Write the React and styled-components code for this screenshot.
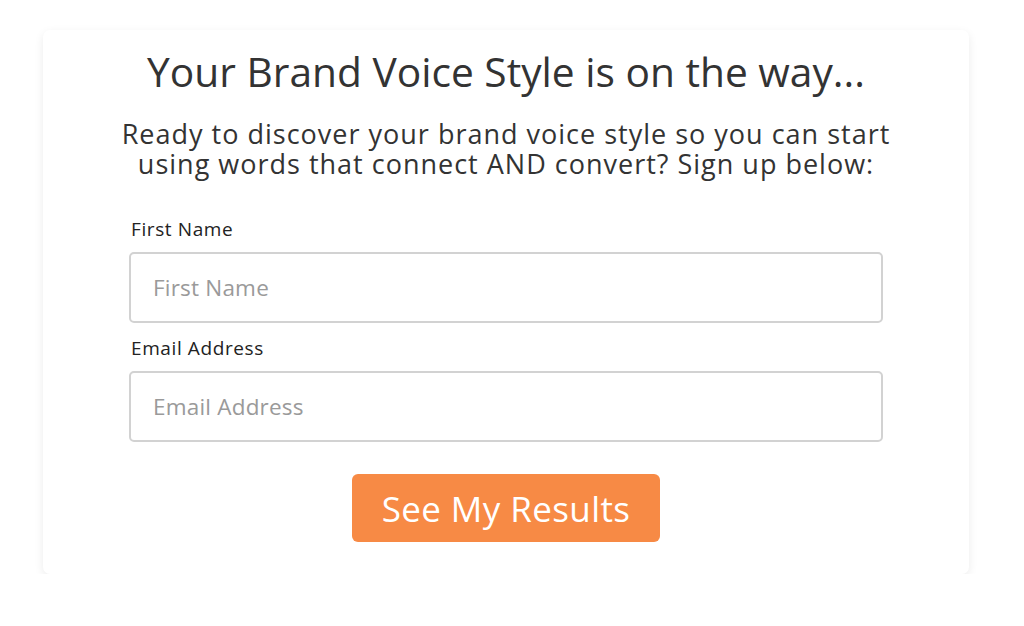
import React from 'react'
import styled, { createGlobalStyle } from 'styled-components'

const GlobalStyle = createGlobalStyle`
  body {
    margin: 0;
    background: #fff;
    font-family: 'Open Sans', Lato, sans-serif;
  }
`

const Page = styled.div`
  display: flex;
  padding: 30px 0 0 43px;
`

const Card = styled.div`
  width: 926px;
  box-sizing: border-box;
  padding: 17px 0 32px;
  background: #fff;
  border-radius: 7px;
  box-shadow: 0 3px 10px rgba(0, 0, 0, 0.08);
  display: flex;
  flex-direction: column;
  align-items: center;
  color: #333;
`

const Title = styled.h1`
  margin: 0;
  font-size: 40.7px;
  font-weight: 400;
  line-height: 48px;
  color: #333;
`

const Intro = styled.p`
  margin: 24px 0 0;
  font-size: 27px;
  line-height: 30px;
  letter-spacing: 1px;
  text-align: center;
  color: #333;
`

const Form = styled.form`
  width: 754px;
  margin-top: 38px;
  display: flex;
  flex-direction: column;
`

const Field = styled.div`
  display: flex;
  flex-direction: column;
  margin-bottom: ${p => p.$gap}px;
`

const Label = styled.label`
  font-size: 19px;
  line-height: 24px;
  letter-spacing: 0.6px;
  margin: 0 0 11px 2px;
  color: #222;
`

const Input = styled.input`
  height: 71px;
  box-sizing: border-box;
  border: 2px solid #d2d2d2;
  border-radius: 5px;
  padding: 0 22px;
  font-family: inherit;
  font-size: 22.5px;
  letter-spacing: 0.2px;
  color: #333;
  outline: none;

  &::placeholder {
    color: #9a9a9a;
  }
`

const Button = styled.button`
  align-self: center;
  width: 308px;
  height: 68px;
  border: none;
  border-radius: 6px;
  background: #f78a45;
  color: #fff;
  font-family: inherit;
  font-size: 35px;
  letter-spacing: 0.4px;
  cursor: pointer;
`

export default function App() {
  return (
    <>
      <GlobalStyle />
      <Page>
        <Card>
          <Title>Your Brand Voice Style is on the way...</Title>
          <Intro>
            Ready to discover your brand voice style so you can start
            <br />
            using words that connect AND convert? Sign up below:
          </Intro>
          <Form onSubmit={e => e.preventDefault()}>
            <Field $gap={13}>
              <Label htmlFor="first">First Name</Label>
              <Input id="first" placeholder="First Name" />
            </Field>
            <Field $gap={32}>
              <Label htmlFor="email">Email Address</Label>
              <Input id="email" placeholder="Email Address" />
            </Field>
            <Button type="submit">See My Results</Button>
          </Form>
        </Card>
      </Page>
    </>
  )
}
